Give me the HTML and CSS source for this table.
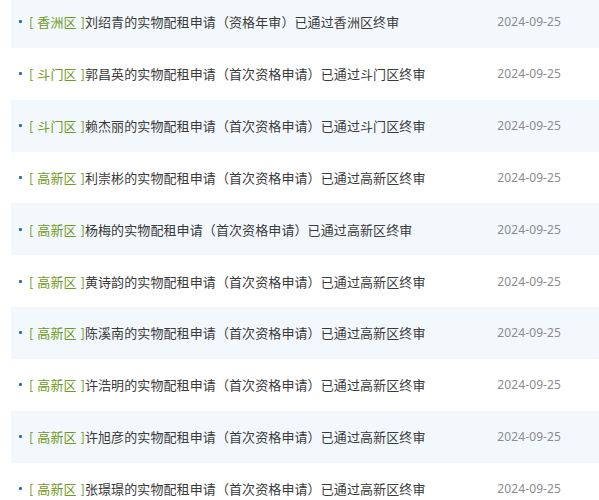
FILE: index.html
```html
<!DOCTYPE html>
<html lang="zh">
<head>
<meta charset="utf-8">
<link rel="stylesheet" href="styles.css">
</head>
<body>
<ul class="list">
  <li class="row"><span class="dot"></span><span class="title"><span class="area">[ 香洲区 ]</span>刘绍青的实物配租申请（资格年审）已通过香洲区终审</span><span class="date">2024-09-25</span></li>
  <li class="row"><span class="dot"></span><span class="title"><span class="area">[ 斗门区 ]</span>郭昌英的实物配租申请（首次资格申请）已通过斗门区终审</span><span class="date">2024-09-25</span></li>
  <li class="row"><span class="dot"></span><span class="title"><span class="area">[ 斗门区 ]</span>赖杰丽的实物配租申请（首次资格申请）已通过斗门区终审</span><span class="date">2024-09-25</span></li>
  <li class="row"><span class="dot"></span><span class="title"><span class="area">[ 高新区 ]</span>利崇彬的实物配租申请（首次资格申请）已通过高新区终审</span><span class="date">2024-09-25</span></li>
  <li class="row"><span class="dot"></span><span class="title"><span class="area">[ 高新区 ]</span>杨梅的实物配租申请（首次资格申请）已通过高新区终审</span><span class="date">2024-09-25</span></li>
  <li class="row"><span class="dot"></span><span class="title"><span class="area">[ 高新区 ]</span>黄诗韵的实物配租申请（首次资格申请）已通过高新区终审</span><span class="date">2024-09-25</span></li>
  <li class="row"><span class="dot"></span><span class="title"><span class="area">[ 高新区 ]</span>陈溪南的实物配租申请（首次资格申请）已通过高新区终审</span><span class="date">2024-09-25</span></li>
  <li class="row"><span class="dot"></span><span class="title"><span class="area">[ 高新区 ]</span>许浩明的实物配租申请（首次资格申请）已通过高新区终审</span><span class="date">2024-09-25</span></li>
  <li class="row"><span class="dot"></span><span class="title"><span class="area">[ 高新区 ]</span>许旭彦的实物配租申请（首次资格申请）已通过高新区终审</span><span class="date">2024-09-25</span></li>
  <li class="row"><span class="dot"></span><span class="title"><span class="area">[ 高新区 ]</span>张璟璟的实物配租申请（首次资格申请）已通过高新区终审</span><span class="date">2024-09-25</span></li>
</ul>
</body>
</html>
```
FILE: styles.css
```css
html, body {
  margin: 0;
  padding: 0;
  background: #ffffff;
  overflow: hidden;
}
body {
  font-family: "Noto Sans", "Noto Sans CJK SC", sans-serif;
}
.list {
  list-style: none;
  margin: -4px 0 0 11px;
  padding: 0;
}
.row {
  display: flex;
  align-items: center;
  height: 51.85px;
  padding: 0 38px 0 8px;
  box-sizing: border-box;
}
.row:nth-child(odd) {
  background: #f3f8fc;
}
.dot {
  width: 3px;
  height: 3px;
  border-radius: 1px;
  background: #2a6db0;
  margin-right: 7px;
  flex: none;
}
.title {
  flex: 1;
  font-size: 13px;
  letter-spacing: 0.1px;
  color: #3a3a3a;
  white-space: nowrap;
  font-family: "Noto Sans CJK SC", sans-serif;
}
.area {
  color: #6f9a22;
  word-spacing: 0.8px;
}
.date {
  font-size: 12px;
  color: #8c8c8c;
  font-family: "Noto Sans", sans-serif;
  letter-spacing: 0.1px;
}
```
